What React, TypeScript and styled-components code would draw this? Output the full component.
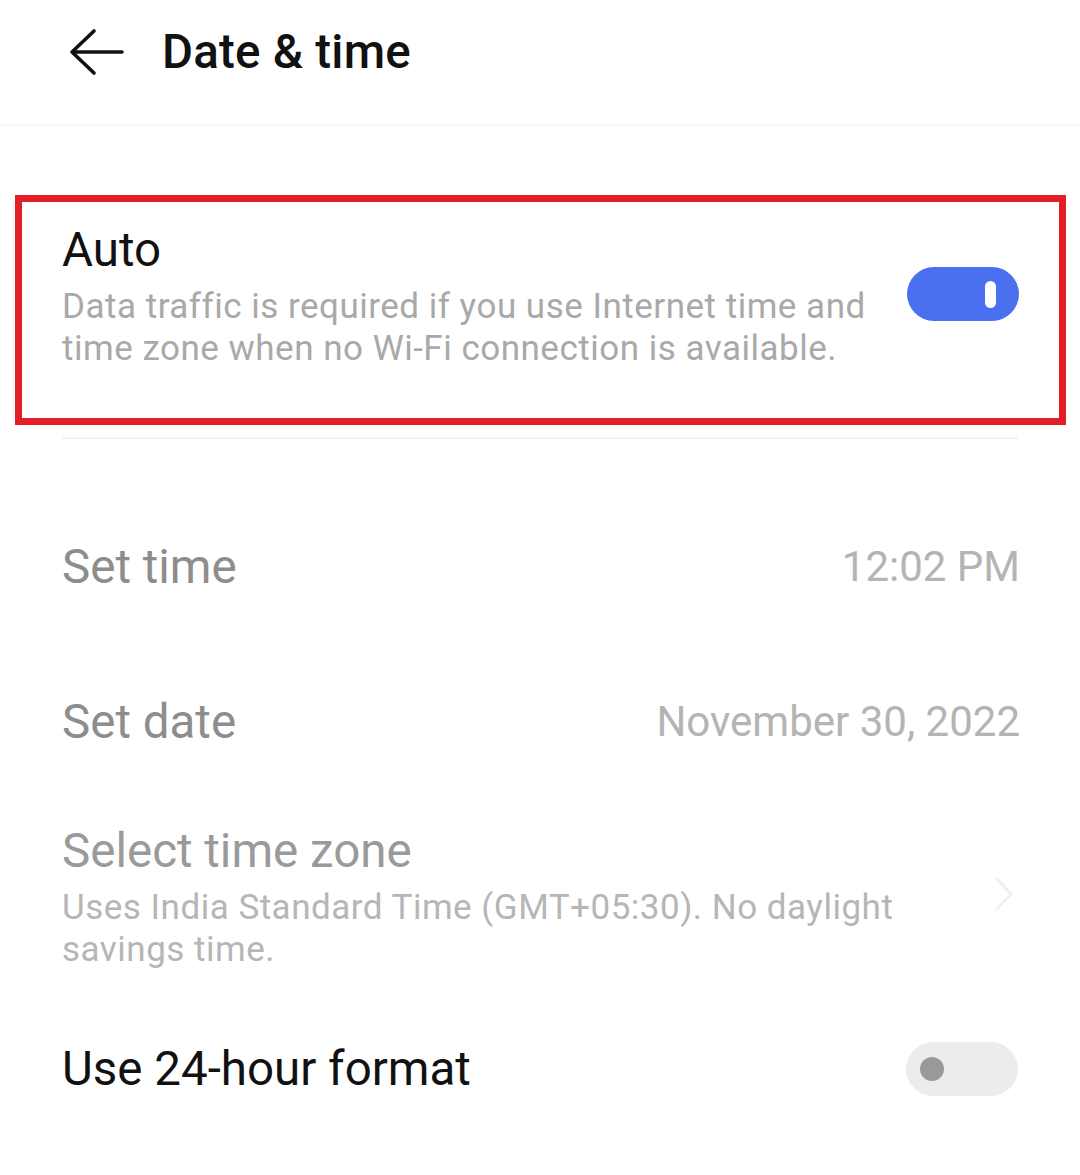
import React from "react";
import styled, { createGlobalStyle } from "styled-components";

const Global = createGlobalStyle`
  html, body { margin: 0; padding: 0; background: #ffffff; }
  body { font-family: Roboto, "Noto Sans", sans-serif; -webkit-font-smoothing: antialiased; }
`;

const Page = styled.div`
  width: 1080px;
  height: 1175px;
  background: #fff;
  display: flex;
  flex-direction: column;
  overflow: hidden;
`;

const Header = styled.header`
  height: 126px;
  display: flex;
  align-items: center;
  padding-left: 68px;
  gap: 38px;
  border-bottom: 2px solid #f7f7f7;
  box-sizing: border-box;
  padding-bottom: 20px;
`;

const BackButton = styled.button`
  width: 56px;
  height: 48px;
  padding: 0;
  border: none;
  background: none;
  display: flex;
  align-items: center;
  justify-content: center;
`;

const Title = styled.h1`
  margin: 0;
  font-size: 47.5px;
  font-weight: 500;
  color: #111;
  letter-spacing: 0.2px;
`;

const Highlight = styled.section`
  margin: 69px 14px 0 15px;
  height: 230px;
  border: 7px solid #e31e26;
  box-sizing: border-box;
  display: flex;
  align-items: center;
  padding: 0 40px 28px 40px;
  gap: 40px;
`;

const TextCol = styled.div`
  flex: 1;
  display: flex;
  flex-direction: column;
`;

const Label = styled.div<{ $tone?: "dark" | "mid" | "soft" }>`
  font-size: 47.5px;
  line-height: 56px;
  color: ${(p) =>
    p.$tone === "mid" ? "#8d8d8d" : p.$tone === "soft" ? "#9a9a9a" : "#111"};
`;

const Desc = styled.div<{ $soft?: boolean }>`
  font-size: 35px;
  line-height: 42px;
  letter-spacing: 0.5px;
  color: ${(p) => (p.$soft ? "#b6b6b6" : "#a9a9a9")};
  margin-top: 8px;
`;

const Switch = styled.div<{ $on: boolean }>`
  width: 112px;
  height: 54px;
  border-radius: 27px;
  flex-shrink: 0;
  background: ${(p) => (p.$on ? "#4a70f0" : "#ececec")};
  display: flex;
  align-items: center;
  justify-content: ${(p) => (p.$on ? "flex-end" : "flex-start")};
  padding: 0 ${(p) => (p.$on ? "23px" : "14px")};
  box-sizing: border-box;
  margin-bottom: ${(p) => (p.$on ? "4px" : "0")};
`;

const OnKnob = styled.span`
  width: 11px;
  height: 27px;
  border-radius: 6px;
  background: #fff;
`;

const OffKnob = styled.span`
  width: 24px;
  height: 24px;
  border-radius: 50%;
  background: #999;
`;

const Divider = styled.hr`
  margin: 12px 62px 0 62px;
  border: none;
  border-top: 2px solid #f3f3f3;
`;

const List = styled.div`
  padding: 50px 62px 0 62px;
  display: flex;
  flex-direction: column;
`;

const Row = styled.div<{ $h: number }>`
  height: ${(p) => p.$h}px;
  display: flex;
  align-items: center;
  justify-content: space-between;
  gap: 40px;
`;

const Value = styled.div`
  font-size: 42px;
  color: #b4b4b4;
  margin-right: -2px;
`;

const Chevron = styled.svg`
  flex-shrink: 0;
  margin-right: 4px;
  margin-bottom: 6px;
`;

export default function App() {
  return (
    <Page>
      <Global />
      <Header>
        <BackButton aria-label="Back">
          <svg width="56" height="48" viewBox="0 0 56 48" fill="none">
            <path
              d="M54 24H4M26 3L4 24l22 21"
              stroke="#111"
              strokeWidth="3.6"
              strokeLinecap="round"
              strokeLinejoin="round"
            />
          </svg>
        </BackButton>
        <Title>Date &amp; time</Title>
      </Header>

      <Highlight>
        <TextCol>
          <Label>Auto</Label>
          <Desc>
            Data traffic is required if you use Internet time and time zone when no Wi-Fi
            connection is available.
          </Desc>
        </TextCol>
        <Switch $on>
          <OnKnob />
        </Switch>
      </Highlight>

      <Divider />

      <List>
        <Row $h={155}>
          <Label $tone="mid">Set time</Label>
          <Value>12:02 PM</Value>
        </Row>
        <Row $h={155}>
          <Label $tone="mid">Set date</Label>
          <Value>November 30, 2022</Value>
        </Row>
        <Row $h={195}>
          <TextCol>
            <Label $tone="soft">Select time zone</Label>
            <Desc $soft>
              Uses India Standard Time (GMT+05:30). No daylight savings time.
            </Desc>
          </TextCol>
          <Chevron width="20" height="36" viewBox="0 0 20 36" fill="none">
            <path d="M3 3l14 15L3 33" stroke="#f0f0f0" strokeWidth="3" strokeLinecap="round" strokeLinejoin="round" />
          </Chevron>
        </Row>
        <Row $h={150}>
          <Label>Use 24-hour format</Label>
          <Switch $on={false}>
            <OffKnob />
          </Switch>
        </Row>
      </List>
    </Page>
  );
}
